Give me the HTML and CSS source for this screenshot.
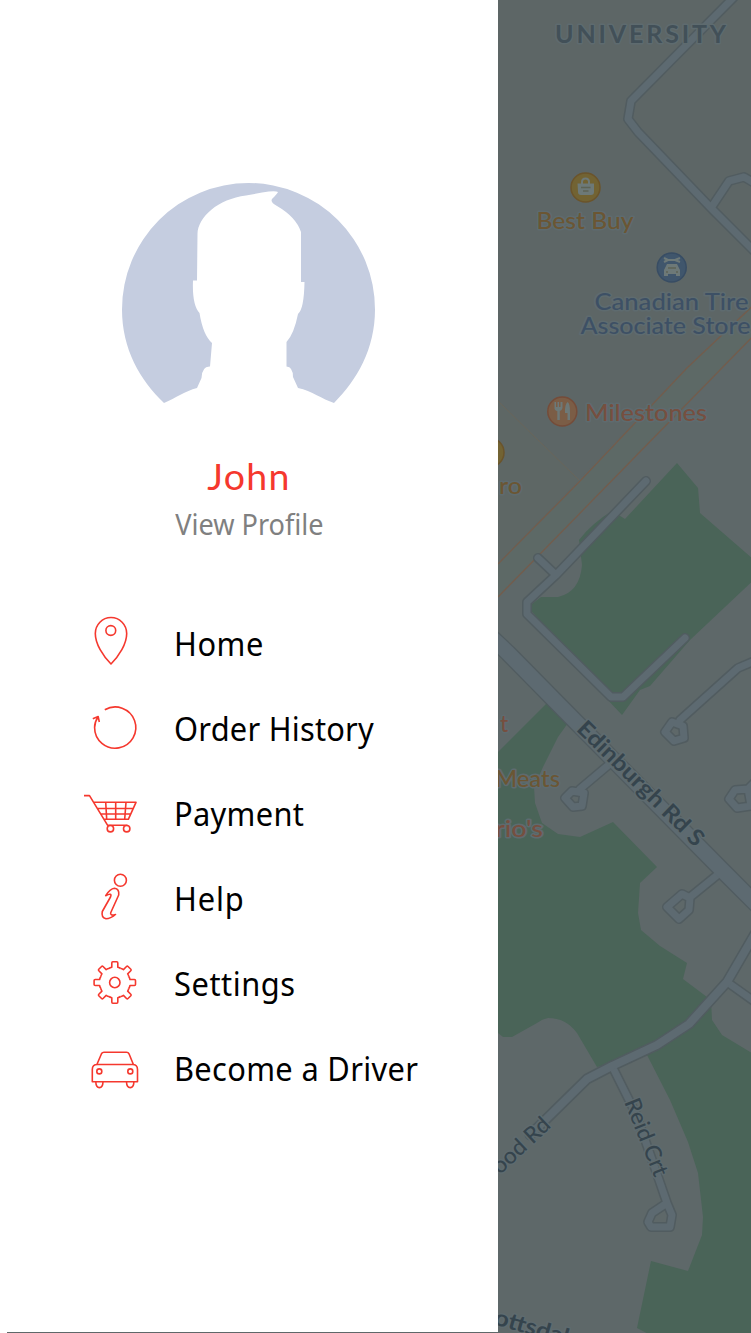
FILE: index.html
```html
<!DOCTYPE html>
<html lang="en">
<head>
<meta charset="utf-8">
<title>Menu</title>
<link rel="stylesheet" href="styles.css">
</head>
<body>
<div class="app">
  <aside class="drawer">
    <header class="profile">
      <svg class="avatar" viewBox="122 183 254 221" aria-hidden="true">
        <path d="M164 403C140 380 122 349 122 309.500A126.500 126.500 0 0 1 375 309.500C375 349 357 380 334 403C322 399 312 391 298 388L293 377Q293 367 286.500 366.500V342Q294 334 298 314Q304 309 304.500 282H301V232Q296 217 277 206Q270 202 272 199Q277 194 278 192Q275 190.500 262 192.500L246 195.500C218 199 198 217 197.500 234L197 280.500H193Q192 305 199.500 313Q203 335 212 343L210 366.500Q202 366 201.500 378L197 388C185 391 176 398 164 403Z"/>
      </svg>
      <h1 class="name">John</h1>
      <a class="view"><span class="fit">View Profile</span></a>
    </header>
    <nav class="menu">
      <a class="item">
        <svg class="icon" viewBox="80 600 60 85"><path d="M111 664C103 656 95.300 644 95.300 633.500A15.700 16 0 0 1 126.700 633.500C126.700 644 119 656 111 664Z"/><circle cx="110.800" cy="630.500" r="4.900"/></svg>
        <span class="label home">Home</span>
      </a>
      <a class="item">
        <svg class="icon" viewBox="80 685 60 85"><path d="M104.800 709.800A20.600 20.600 0 1 1 94.600 727.500Q94.600 722 98 717M92.800 718.700L98.200 716.600L99.300 722"/></svg>
        <span class="label order">Order History</span>
      </a>
      <a class="item">
        <svg class="icon" viewBox="80 770 60 85"><path d="M84 795.600H89.500L107.500 825.200H127.500M93.700 802.300H136L128.300 819.300H104.500M97.500 808.500H133M101 814H130.600M105.700 802.300L106.700 819.300M115.700 802.300V819.300M126 802.300L124.700 819.300"/><circle cx="110.400" cy="828.700" r="3.200"/><circle cx="126.700" cy="828.700" r="3.200"/></svg>
        <span class="label pay">Payment</span>
      </a>
      <a class="item">
        <svg class="icon" viewBox="80 855 60 85"><circle cx="120.400" cy="880.300" r="6"/><path d="M105.700 895.700Q110 888.800 114.500 888.300Q119.500 889 118.700 895L110.800 912.500Q109.500 916.200 115.500 914.500Q110.500 918.800 106 918.800Q101 917.500 102.300 911.500L110.500 897Q112.500 892.300 105.700 895.700Z"/></svg>
        <span class="label help">Help</span>
      </a>
      <a class="item">
        <svg class="icon" viewBox="80 940 60 85"><defs><path id="tooth" d="M-5.800-13.900Q-5-14.800-3-15.200V-19.600Q-3-20.700-2-20.700H2Q3-20.700 3-19.600V-15.200Q5-14.800 5.800-13.900"/></defs><g transform="translate(114.800 982.500)"><use href="#tooth"/><use href="#tooth" transform="rotate(45)"/><use href="#tooth" transform="rotate(90)"/><use href="#tooth" transform="rotate(135)"/><use href="#tooth" transform="rotate(180)"/><use href="#tooth" transform="rotate(225)"/><use href="#tooth" transform="rotate(270)"/><use href="#tooth" transform="rotate(315)"/><circle r="5.200"/></g></svg>
        <span class="label set">Settings</span>
      </a>
      <a class="item">
        <svg class="icon" viewBox="80 1025 60 85"><path d="M97 1064.300L101.600 1053.500Q102.300 1052.300 104 1052.300H126.500Q128.300 1052.300 129 1053.800L133.300 1064.300M92.300 1081.700V1069.500Q92.300 1064.500 97.300 1064.500H132.500Q137.500 1064.500 137.500 1069.500V1081.700ZM95.800 1082Q96 1087.600 99.400 1087.600Q102.800 1087.600 103 1082M126.500 1082Q126.700 1087.600 130.200 1087.600Q133.700 1087.600 133.900 1082"/><circle cx="99.300" cy="1071.400" r="2.500"/><circle cx="130.300" cy="1071.400" r="2.500"/></svg>
        <span class="label drive">Become a Driver</span>
      </a>
    </nav>
  </aside>
  <main class="map">
    <svg class="canvas" viewBox="498 0 253 1333">
      <path class="tint" d="M498 0H751V307L687 368L498 564Z"/>
      <path class="tint2" d="M498 401L579 480L498 564Z"/>
      <path class="band" d="M498 564L581 480L687 368L760 299V329L632 460L498 597Z"/>
      <path class="orange" d="M498 564L581 480L687 368L760 299M760 329L632 460L498 597"/>
      <path class="thin" d="M498 401L579 480"/>

      <g class="green">
        <path d="M677 463L698 488L700 513L760 565V574L690 640L650 686L640 690L622 715L605 697L528 607L541 597H558Q580 592 582 565L579 540Q592 523 612 511L625 519Z"/>
        <path d="M498 752L547 703L568 723L558 737L543 767L534 787L535 803L542 823L558 834L580 837L613 822L657 867L640 883L638 913L641 930L660 946L687 963L683 979L711 1000L712 1020L722 1035L760 1058V1340H660L637 1328L651 1261L688 1271L702 1235L703 1217L698 1173L688 1142L670 1100L647 1055L597 1067L577 1033Q566 1018 548 1018Q542 1019 537 1023L512 1037H503L498 1033Z"/>
      </g>

      <defs>
        <g id="lanes">
          <path d="M736-5L631 101L628 119L638 132L711 208L765 262M711 208L729 181L744 177L756 184"/>
          <path d="M646 481L556 575L527 602V614L611 697H623L685 638M538 558L556 575"/>
          <path d="M757 660L738 668L680 720M672 722L683 726L684 738L674 741L665 732Z"/>
          <path d="M612 762L580 789M572 791L584 793L582 806L573 807L565 798Z"/>
          <path d="M760 777L747 790M735 790L748 789L751 806L737 808L729 799Z"/>
          <path d="M721 872L689 898M682 894L690 898L689 910L679 919L667 907Z"/>
          <path d="M612 1066L636 1114L657 1174L667 1203L672 1215L670 1227H651L648 1222L652 1213L667 1203"/>
          <path d="M727 982L758 1004"/>
        </g>
        <path id="ellis" d="M756 932L727 982L689 1024L657 1045L612 1066L587 1079L530 1135"/>
        <path id="edinburgh" d="M488 634L508 653L574 720L719 867L760 908"/>
      </defs>
      <use class="case" href="#lanes"/><use class="case mid" href="#ellis"/><use class="case wide" href="#edinburgh"/>
      <use class="road" href="#lanes"/><use class="road mid" href="#ellis"/><use class="road wide" href="#edinburgh"/>

      <circle class="poi gold" cx="585.500" cy="187.500" r="14.500"/>
      <path class="glyph" d="M577.500 183.500H594V192Q594 195 591 195H581Q578 195 578 192Z"/><path class="glyph-line" d="M582 184V182Q582 178.500 585.500 178.500Q589 178.500 589 182V184"/><path class="slot" d="M581 187.500H590.500M583 191H588.500"/>
      <circle class="poi blue" cx="671.700" cy="267.500" r="14.500"/>
      <path class="glyph" d="M664 270L667 264H677L680 270V276H676V274H668V276H664Z"/><path class="glyph-line" d="M664 258L668 260H675L680 258M664 262L668 260M675 260L680 262"/><path class="slot" d="M668 268H676M666 272H668M676 272H678"/>
      <circle class="poi rust" cx="562.300" cy="411.500" r="14.500"/>
      <path class="glyph" d="M554.500 402H556V407H557.500V402H559V407H560.500V402H562.500V408Q562 410.500 559.800 411V420H557.300V411Q554.500 410.500 554.500 408ZM567.500 402Q570 403 570 412V420H567.500V413H565Q564.500 405 567.500 402Z"/>
      <circle class="poi gold" cx="489.500" cy="452.500" r="14.500"/>

      <g class="names">
        <text class="area" x="555" y="42.500" textLength="171">UNIVERSITY</text>
        <text class="t-gold" x="536.500" y="229" textLength="97" lengthAdjust="spacingAndGlyphs">Best Buy</text>
        <text class="t-blue" x="594.500" y="310" textLength="154" lengthAdjust="spacingAndGlyphs">Canadian Tire</text>
        <text class="t-blue" x="580.500" y="334" textLength="170" lengthAdjust="spacingAndGlyphs">Associate Store</text>
        <text class="t-rust" x="585" y="420.500" textLength="122" lengthAdjust="spacingAndGlyphs">Milestones</text>
        <text class="t-gold" x="499" y="493.500" textLength="23" lengthAdjust="spacingAndGlyphs">ro</text>
        <text class="t-rust" x="500" y="732">t</text>
        <text class="t-gold" x="495" y="787" textLength="65" lengthAdjust="spacingAndGlyphs">Meats</text>
        <text class="t-rust" x="495" y="837" textLength="48" lengthAdjust="spacingAndGlyphs">rio's</text>
        <text class="street strong" transform="translate(575.500 730) rotate(44.500)" textLength="168" lengthAdjust="spacingAndGlyphs">Edinburgh Rd S</text>
        <text class="street" transform="translate(624 1102) rotate(68)" textLength="82" lengthAdjust="spacingAndGlyphs">Reid Crt</text>
        <text class="street" transform="translate(500 1175) rotate(-43)" textLength="71" lengthAdjust="spacingAndGlyphs">ood Rd</text>
        <text class="street strong" transform="translate(493 1324) rotate(16)" textLength="90" lengthAdjust="spacingAndGlyphs">ottsdale</text>
      </g>
    </svg>
  </main>
</div>
</body>
</html>
```
FILE: styles.css
```css
* { box-sizing: border-box; }
body { margin: 0; background: #fff; font-family: "Noto Sans", "Open Sans", sans-serif; }
.app { display: flex; width: 751px; height: 1333px; overflow: hidden; }

.drawer { width: 498px; height: 1333px; background: linear-gradient(#5e6869, #5e6869) 7px 1332px / 491px 1px no-repeat #fff; }
.profile { display: flex; flex-direction: column; align-items: center; height: 600px; padding-top: 183px; }
.avatar { width: 254px; height: 221px; fill: #c5cde0; }
.name { margin: 46px 0 0; font-family: Lato, "Noto Sans", sans-serif; font-size: 37.5px; font-weight: 400; line-height: 52px; letter-spacing: 1.3px; color: #f5382e; }
.view { font-size: 29px; line-height: 40px; margin-top: 2px; color: #808080; }
.fit { display: inline-block; transform: scaleX(.935); white-space: nowrap; }

.menu { display: flex; flex-direction: column; padding-left: 80px; }
.item { display: flex; align-items: center; height: 85px; gap: 34px; }
.icon { flex: none; width: 60px; height: 85px; fill: none; stroke: #f5382e; stroke-width: 1.6; stroke-linejoin: round; }
.label { font-size: 33.5px; line-height: 46px; padding-top: 1px; color: #000; white-space: nowrap; transform: scaleX(.92); transform-origin: left; }
.home { letter-spacing: .6px; }
.order { letter-spacing: .25px; }
.pay { letter-spacing: .35px; }
.help { letter-spacing: .9px; }
.set { letter-spacing: .6px; }
.drive { letter-spacing: .36px; }

.map { width: 253px; height: 1333px; background: #5e6869; }
.canvas { display: block; width: 253px; height: 1333px; }
.tint { fill: #5d6666; }
.tint2 { fill: #5e6765; }
.band { fill: #5d6966; }
.orange { fill: none; stroke: #735d4d; stroke-width: 1.3; }
.thin { fill: none; stroke: #6a665b; stroke-width: 1; }
.green { fill: #4a6458; }
.case, .road { fill: none; stroke-linecap: round; stroke-linejoin: round; }
.case { stroke: #515c60; stroke-width: 10; }
.road { stroke: #5d6a71; stroke-width: 7; }
.case.mid { stroke-width: 11; }
.road.mid { stroke-width: 8; }
.case.wide { stroke-width: 17.500px; }
.road.wide { stroke-width: 15px; }

.poi { stroke-width: 1.5; }
.gold { fill: #726333; stroke: #6b542b; }
.blue { fill: #40566c; stroke: #384d64; }
.rust { fill: #7b5d46; stroke: #754c39; }
.glyph { fill: #6d7978; }
.glyph-line { fill: none; stroke: #6d7978; stroke-width: 2; }
.slot { fill: none; stroke: #5d6355; stroke-width: 1.5; }

.names { font-family: Lato, "Open Sans", sans-serif; font-size: 22.800px; font-weight: 500; paint-order: stroke; stroke: #5e6b6f; stroke-width: 3px; stroke-linejoin: round; }
.area { font-size: 25px; font-weight: 700; fill: #425058; }
.t-gold { fill: #6b5633; }
.t-blue { fill: #3d5065; }
.t-rust { fill: #764f3f; }
.street { font-size: 22.500px; fill: #35444d; }
.strong { font-weight: 700; }
```
